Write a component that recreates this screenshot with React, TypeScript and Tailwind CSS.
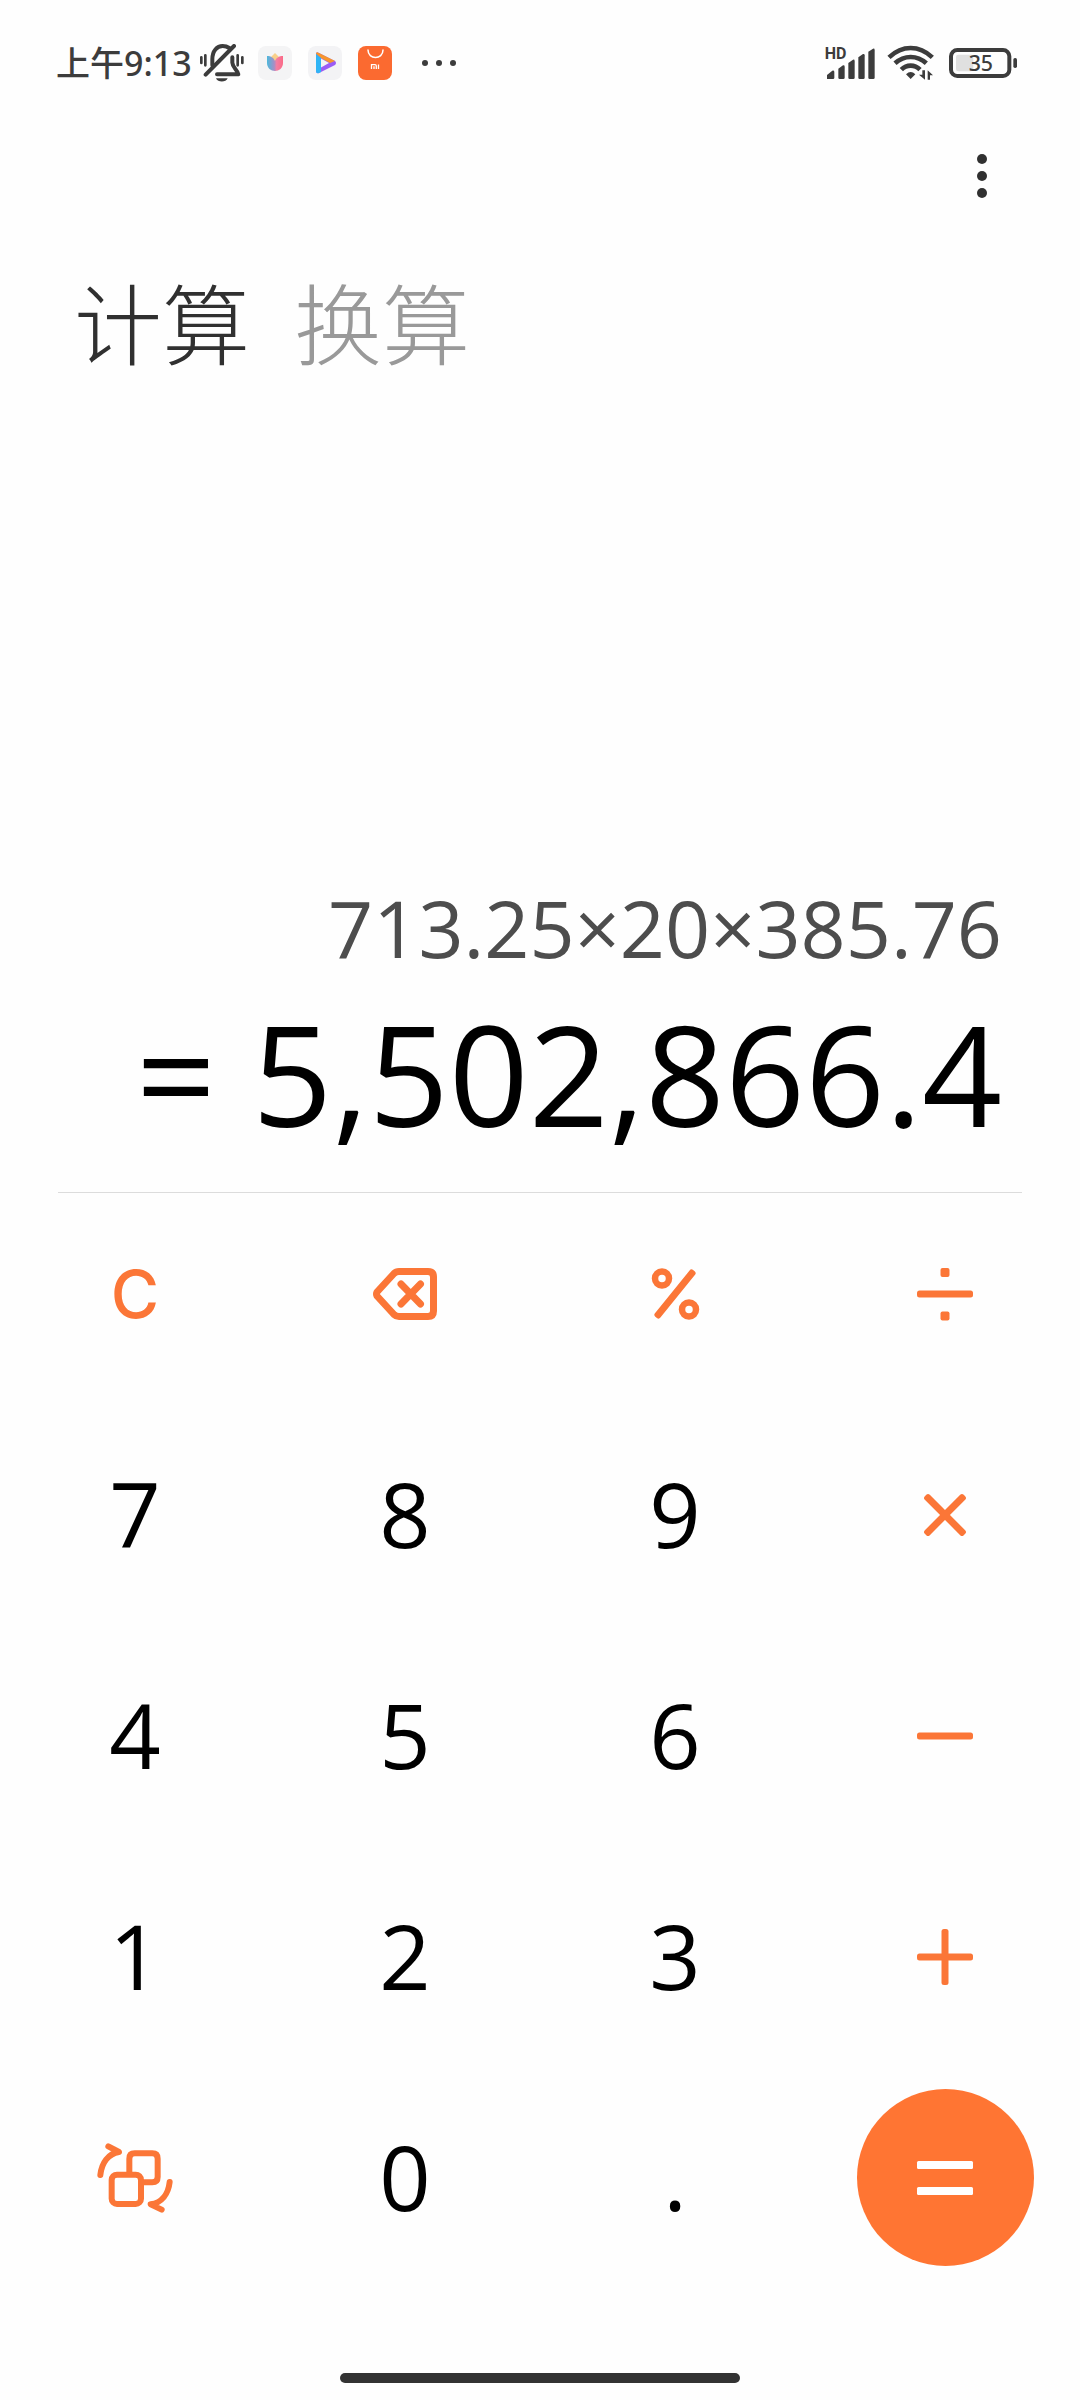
import { useState } from 'react';
import type { ReactNode } from 'react';

interface Key {
  id: string;
  label: string;
  icon?: ReactNode;
}

const MAX_LENGTH = 18;

function MutedBellIcon() {
  return (
    <svg className="ml-2 h-[38px] w-11" viewBox="478 44 132 114" fill="none" stroke="currentColor" strokeLinecap="round">
      <path d="M515 108V90C515 64 529 50 546 50C554 50 560 52 566 56" strokeWidth="12" />
      <path d="M575 84V100C576 116 590 120 593 135H529" strokeWidth="12" strokeLinejoin="round" />
      <path d="M495 136L580 50" strokeWidth="12" />
      <path d="M526 147H561C556 160 531 160 526 147Z" fill="currentColor" stroke="none" />
      <path d="M482 84V101M494 78V108M591 78V108M605 84V101" strokeWidth="8" />
    </svg>
  );
}

function TulipIcon() {
  return (
    <svg className="size-[34px]" viewBox="0 0 34 34">
      <defs>
        <linearGradient id="tulip" x1="0" y1="0" x2="1" y2="0">
          <stop offset="0" stopColor="#4cb9dc" />
          <stop offset="0.45" stopColor="#a58fc6" />
          <stop offset="0.6" stopColor="#f47ea2" />
          <stop offset="1" stopColor="#fb6a86" />
        </linearGradient>
      </defs>
      <rect width="34" height="34" rx="8" fill="#f4f4f5" />
      <path d="M13 11L17 7L21 11L17 17Z" fill="#f8cf8a" />
      <path d="M9 10C13 10 16 12 17 15C18 12 21 10 25 10V17C25 22 21 25 17 25C13 25 9 22 9 17Z" fill="url(#tulip)" />
    </svg>
  );
}

function VideoIcon() {
  return (
    <svg className="size-[34px]" viewBox="0 0 34 34">
      <rect width="34" height="34" rx="8" fill="#f3f3f5" />
      <path d="M8 8Q8 5 11 7L27 15Q29 17 27 19L11 27Q8 28 8 25Z" fill="#9a5cf5" />
      <path d="M8 8Q8 5 11 7L27 15L22 17L13 12Z" fill="#f7962c" />
      <path d="M8 8L13 12V26L11 27Q8 28 8 25Z" fill="#2fb4f5" />
      <path d="M13 12.5L21 17L13 21.5Z" fill="#f3f3f5" />
    </svg>
  );
}

function StoreIcon() {
  return (
    <svg className="size-[34px]" viewBox="0 0 34 34" fill="none" stroke="#fff">
      <rect width="34" height="34" rx="8" fill="#fb6a30" stroke="none" />
      <path d="M10 4C10 14 25 14 25 4" strokeWidth="1.5" strokeLinecap="round" />
      <path d="M13.5 23V18.7H17Q18.3 18.7 18.3 20V23M16 20.3V23M20.5 18.5V23" strokeWidth="1.3" />
    </svg>
  );
}

function SignalIcon() {
  return (
    <svg className="h-[42px] w-[52px]" viewBox="69 36 156 126" fill="currentColor">
      <text x="74" y="86" fontSize="48" className="font-['Roboto'] font-bold">HD</text>
      <path d="M81 147V135L97 122Q103 121 103 126V143Q103 147 99 147Z" />
      <path d="M115 143V116L129 106Q134 105 134 110V143Q134 147 130 147H119Q115 147 115 143Z" />
      <path d="M145 143V99L159 89Q164 88 164 93V143Q164 147 160 147H149Q145 147 145 143Z" />
      <path d="M175 143V82L189 72Q194 71 194 76V143Q194 147 190 147H179Q175 147 175 143Z" />
      <path d="M205 143V65L219 56Q224 55 224 60V143Q224 147 220 147H209Q205 147 205 143Z" />
    </svg>
  );
}

function WifiIcon() {
  return (
    <svg className="ml-3 h-9 w-12" viewBox="262 48 144 108" fill="none" stroke="currentColor" strokeWidth="14">
      <path d="M268 85Q298 57 333 57Q368 57 398 85" />
      <path d="M286 103Q307 84 333 84Q359 84 380 103" />
      <path d="M305 122Q317 110 333 110Q349 110 361 122" />
      <path d="M319 136Q333 122 347 136L333 150Z" fill="currentColor" stroke="none" />
      <path d="M376 124V152L358 137H368V124ZM384 152V124L400 139H391V152Z" fill="currentColor" stroke="none" />
    </svg>
  );
}

function BatteryIcon() {
  return (
    <svg className="ml-[14px] h-[34px] w-[68px]" viewBox="447 48 204 102">
      <rect x="453" y="60" width="175" height="78" rx="19" fill="none" stroke="currentColor" strokeWidth="12" />
      <rect x="468" y="74" width="52" height="50" rx="7" fill="#e0e0e0" />
      <rect x="640" y="84" width="11" height="30" rx="5" fill="currentColor" />
      <text x="506" y="124" fontSize="64" fill="currentColor" className="font-medium">35</text>
    </svg>
  );
}

function StatusBar() {
  return (
    <header className="flex h-[126px] items-center justify-between pr-[63px] pl-14 text-[#3c3c3c]">
      <div className="flex items-center">
        <span className="text-[34px] leading-10 font-medium">上午9:13</span>
        <MutedBellIcon />
        <div className="ml-[14px] flex gap-4">
          <TulipIcon />
          <VideoIcon />
          <StoreIcon />
        </div>
        <div className="ml-[30px] flex gap-2">
          <i className="size-[6px] rounded-full bg-current" />
          <i className="size-[6px] rounded-full bg-current" />
          <i className="size-[6px] rounded-full bg-current" />
        </div>
      </div>
      <div className="flex items-center">
        <SignalIcon />
        <WifiIcon />
        <BatteryIcon />
      </div>
    </header>
  );
}

function KeyIcon({ children }: { children: ReactNode }) {
  return (
    <svg className="size-20" viewBox="-40 -40 80 80" fill="currentColor">
      {children}
    </svg>
  );
}

const backspaceIcon = (
  <KeyIcon>
    <g fill="none" stroke="currentColor" strokeWidth="7" strokeLinejoin="round" strokeLinecap="round">
      <path d="M-28 -2L-11 -20.5Q-9 -22.5 -6 -22.5H23Q28.5 -22.5 28.5 -17V17Q28.5 22.5 23 22.5H-6Q-9 22.5 -11 20.5L-28 2Q-29 0 -28 -2Z" />
      <path d="M-4 -10L15.5 10M15.5 -10L-4 10" />
    </g>
  </KeyIcon>
);

const percentIcon = (
  <KeyIcon>
    <circle cx="-13" cy="-15.5" r="7" fill="none" stroke="currentColor" strokeWidth="6.5" />
    <circle cx="14" cy="15.5" r="7" fill="none" stroke="currentColor" strokeWidth="6.5" />
    <rect x="-30" y="-3.5" width="60" height="7" rx="2.5" transform="rotate(-51)" />
  </KeyIcon>
);

const divideIcon = (
  <KeyIcon>
    <rect x="-4.5" y="-26" width="9" height="9" rx="2" />
    <rect x="-28" y="-3.5" width="56" height="7" rx="2.5" />
    <rect x="-4.5" y="17.5" width="9" height="9" rx="2" />
  </KeyIcon>
);

const multiplyIcon = (
  <KeyIcon>
    <rect x="-27.5" y="-3.5" width="55" height="7" rx="2.5" transform="rotate(45)" />
    <rect x="-27.5" y="-3.5" width="55" height="7" rx="2.5" transform="rotate(-45)" />
  </KeyIcon>
);

const minusIcon = (
  <KeyIcon>
    <rect x="-28" y="-3.5" width="56" height="7" rx="2.5" />
  </KeyIcon>
);

const plusIcon = (
  <KeyIcon>
    <rect x="-28" y="-3.5" width="56" height="7" rx="2.5" />
    <rect x="-3.5" y="-28" width="7" height="56" rx="2.5" />
  </KeyIcon>
);

const convertIcon = (
  <svg
    className="size-20"
    viewBox="46 172 240 240"
    fill="none"
    stroke="currentColor"
    strokeWidth="18"
    strokeLinecap="round"
    strokeLinejoin="round"
  >
    <path d="M149 276V234Q149 218 165 218H218Q234 218 234 234V289Q234 305 218 305H190" />
    <rect x="96" y="282" width="88" height="88" rx="16" />
    <path d="M62 283C66 246 86 219 118 214L86 197" />
    <path d="M270 304C266 340 246 366 213 371L246 387" />
  </svg>
);

const equalsIcon = (
  <KeyIcon>
    <rect x="-28" y="-17" width="56" height="8" rx="1.5" />
    <rect x="-28" y="9" width="56" height="8" rx="1.5" />
  </KeyIcon>
);

const KEYS: Key[] = [
  { id: 'clear', label: 'C' },
  { id: 'back', label: '退格', icon: backspaceIcon },
  { id: '%', label: '百分号', icon: percentIcon },
  { id: '÷', label: '除', icon: divideIcon },
  { id: '7', label: '7' },
  { id: '8', label: '8' },
  { id: '9', label: '9' },
  { id: '×', label: '乘', icon: multiplyIcon },
  { id: '4', label: '4' },
  { id: '5', label: '5' },
  { id: '6', label: '6' },
  { id: '-', label: '减', icon: minusIcon },
  { id: '1', label: '1' },
  { id: '2', label: '2' },
  { id: '3', label: '3' },
  { id: '+', label: '加', icon: plusIcon },
  { id: 'convert', label: '换算', icon: convertIcon },
  { id: '0', label: '0' },
  { id: '.', label: '.' },
  { id: '=', label: '等于', icon: equalsIcon },
];

// × and ÷ are applied to the last term, + and - start a new one
function calculate(expression: string) {
  const tokens = expression.match(/[\d.]+%?|[-+×÷]/g) || [];
  const terms: number[] = [0];
  let op = '+';
  tokens.forEach(token => {
    if (/^[-+×÷]$/.test(token)) {
      op = token;
      return;
    }
    const value = token.endsWith('%') ? parseFloat(token) / 100 : parseFloat(token);
    if (op === '+') terms.push(value);
    else if (op === '-') terms.push(-value);
    else if (op === '×') terms.push(terms.pop()! * value);
    else terms.push(terms.pop()! / value);
  });
  return terms.reduce((sum, term) => sum + term, 0);
}

function keyStyle(key: Key) {
  if (key.id === '=') return 'bg-[#ff7533] text-white';
  if (key.id === 'clear') return "font-['Inter'] text-[66px] leading-[66px] font-medium text-[#fb7637]";
  if (key.icon) return 'text-[#fb7637]';
  return "pb-1 font-['Open_Sans'] text-[90px] leading-[90px] font-[370] text-black";
}

export default function App() {
  const [tab, setTab] = useState('计算');
  const [expression, setExpression] = useState('713.25×20×385.76');

  const handlePress = (id: string) => {
    if (id === '=') return;
    if (id === 'convert') setTab('换算');
    else if (id === 'clear') setExpression('');
    else if (id === 'back') setExpression(prev => prev.slice(0, -1));
    else setExpression(prev => (prev.length < MAX_LENGTH ? prev + id : prev));
  };

  const result = calculate(expression).toLocaleString('en-US', { maximumFractionDigits: 6 });

  return (
    <div className="flex min-h-screen flex-col bg-[#fefefe] font-['Noto_Sans','Noto_Sans_CJK_SC',sans-serif]">
      <StatusBar />

      <div className="flex h-[100px] items-center justify-end pr-[76px]">
        <button type="button" aria-label="更多" className="flex w-11 flex-col items-center gap-[7px]">
          <i className="size-[10px] rounded-full bg-[#303030]" />
          <i className="size-[10px] rounded-full bg-[#303030]" />
          <i className="size-[10px] rounded-full bg-[#303030]" />
        </button>
      </div>

      <nav className="mt-11 flex gap-11 px-[74px]">
        {['计算', '换算'].map(name => (
          <button
            key={name}
            type="button"
            onClick={() => setTab(name)}
            className={`font-['Noto_Sans_CJK_SC',sans-serif] text-[88px] leading-[100px] font-light ${
              tab === name ? 'text-[#303030]' : 'text-[#999999]'
            }`}
          >
            {name}
          </button>
        ))}
      </nav>

      <main className="flex flex-1 flex-col justify-end">
        <section className="flex flex-col gap-[35px] pr-[78px] pb-[49px] text-right font-['Open_Sans'] font-[370] whitespace-nowrap">
          <p className="text-[79px] leading-[80px] text-[#4d4d4d]">{expression}</p>
          <output className="text-[140px] leading-[140px] text-black">= {result}</output>
        </section>

        <hr className="mx-[58px] border-[#dcdcdc]" />

        <div className="mt-3 grid grid-cols-4 justify-items-center gap-y-11">
          {KEYS.map(key => (
            <button
              key={key.id}
              type="button"
              aria-label={key.label}
              onClick={() => handlePress(key.id)}
              className={`flex size-[177px] items-center justify-center rounded-full ${keyStyle(key)}`}
            >
              {key.icon || key.label}
            </button>
          ))}
        </div>
      </main>

      <footer className="flex justify-center pt-[107px] pb-[17px]">
        <div className="h-[10px] w-[400px] rounded-full bg-[#333333]" />
      </footer>
    </div>
  );
}
